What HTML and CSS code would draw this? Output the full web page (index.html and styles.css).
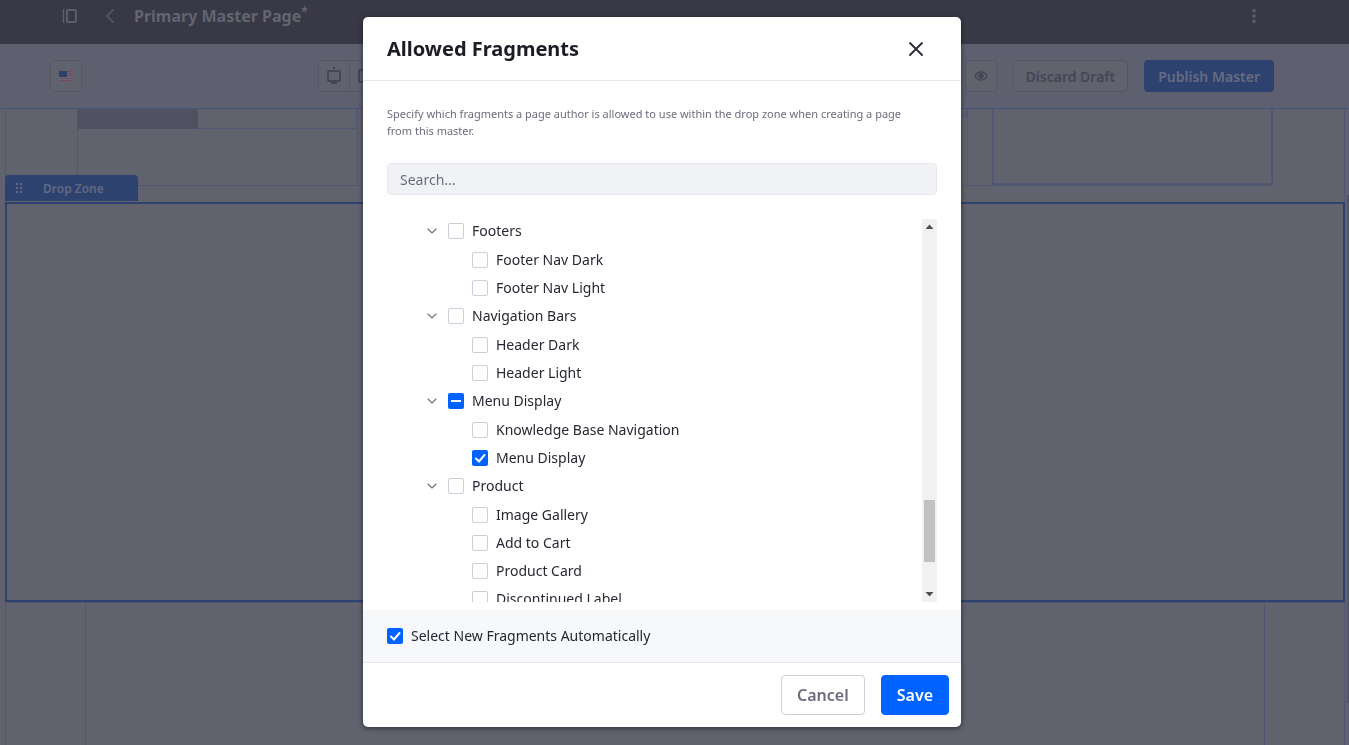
FILE: index.html
```html
<!DOCTYPE html>
<html lang="en">
<head>
<meta charset="utf-8">
<title>Primary Master Page</title>
<link rel="stylesheet" href="styles.css">
</head>
<body>
<div class="page">
  <header class="topbar">
    <button class="icon-btn" type="button" aria-label="Toggle menu">
      <svg width="16" height="16" viewBox="0 0 16 16" fill="none" stroke="currentColor"><path d="M1.500 1v14" stroke-width="1.400"/><rect x="5" y="2" width="9" height="12" rx="1" stroke-width="2"/></svg>
    </button>
    <a class="back" href="#" aria-label="Back">
      <svg width="8" height="14" viewBox="0 0 8 14" fill="none" stroke="currentColor" stroke-width="1.4" stroke-linecap="round"><path d="M7 1 1 7l6 6"/></svg>
    </a>
    <h1 class="page-title">Primary Master Page<sup>*</sup></h1>
    <button class="icon-btn more" type="button" aria-label="More options">
      <svg width="16" height="16" viewBox="0 0 16 16" fill="currentColor"><circle cx="8" cy="2.600" r="1.800"/><circle cx="8" cy="8" r="1.800"/><circle cx="8" cy="13.400" r="1.800"/></svg>
    </button>
  </header>

  <div class="toolbar">
    <button class="tool" type="button" aria-label="Language: English">
      <svg width="14" height="10" viewBox="0 0 14 10"><path fill="#6a6873" d="M0 0h14v10H0z"/><path stroke="#754a5c" d="M0 .5h14M0 2.500h14M0 4.500h14M0 7.500h14M0 9.500h14"/><path fill="#2e406f" d="M0 0h8v6H0z"/></svg>
    </button>
    <div class="devices">
      <button class="tool" type="button" aria-label="Desktop">
        <svg width="16" height="18" viewBox="0 0 16 18" fill="none" stroke="currentColor"><path d="M8 0v2" stroke-width="2"/><rect x="2" y="4" width="12" height="10" rx="1" stroke-width="2"/><path d="M5 16h6" stroke-width="2"/></svg>
      </button>
      <button class="tool" type="button" aria-label="Tablet">
        <svg width="16" height="16" viewBox="0 0 16 16" fill="none" stroke="currentColor" stroke-width="2"><rect x="2" y="2" width="12" height="12" rx="1"/></svg>
      </button>
    </div>
    <div class="actions">
      <button class="tool" type="button" aria-label="Preview">
        <svg width="14" height="10" viewBox="0 0 14 10"><path d="M1 5C2.500 2 4.500 1 7 1s4.500 1 6 4c-1.500 3-3.500 4-6 4S2.500 8 1 5z" fill="none" stroke="currentColor" stroke-width="1.400"/><path d="M7 2.200a2.800 2.800 0 1 0 2.800 2.800H7z" fill="currentColor"/><circle cx="8" cy="4" r="1.400" fill="currentColor"/></svg>
      </button>
      <button class="tool text" type="button">Discard Draft</button>
      <button class="tool text primary" type="button">Publish Master</button>
    </div>
  </div>

  <main class="canvas">
    <div class="row">
      <div class="col first"><div class="block"></div><div class="field"></div></div>
      <div class="col middle"><div class="slim"></div></div>
      <div class="col last"></div>
    </div>
    <section class="dropzone">
      <div class="tab">
        <svg width="7" height="10" viewBox="0 0 7 10" fill="currentColor"><path d="M0 0h2v2H0zM4 0h2v2H4zM0 4h2v2H0zM4 4h2v2H4zM0 8h2v2H0zM4 8h2v2H4z"/></svg>
        <span>Drop Zone</span>
      </div>
    </section>
    <div class="below"><div class="inner"></div></div>
  </main>
  <div class="page-scroll" aria-hidden="true"></div>
</div>

<div class="backdrop">
  <div class="dialog" role="dialog" aria-modal="true" aria-labelledby="dialog-title">
    <div class="dialog-head">
      <h2 id="dialog-title">Allowed Fragments</h2>
      <button class="close" type="button" aria-label="Close">
        <svg width="16" height="16" viewBox="0 0 16 16" fill="none" stroke="currentColor" stroke-width="1.800" stroke-linecap="round"><path d="m2 2 12 12M14 2 2 14"/></svg>
      </button>
    </div>

    <div class="dialog-body">
      <p class="hint">Specify which fragments a page author is allowed to use within the drop zone when creating a page from this master.</p>
      <input class="search" type="text" placeholder="Search..." aria-label="Search fragments">
      <div class="scroller">
        <ul class="tree">
          <li>
            <div class="node"><button class="toggle" type="button" aria-label="Collapse Footers"><svg width="10" height="6" viewBox="0 0 10 6"><path d="m1 1 4 4 4-4"/></svg></button><label><input type="checkbox">Footers</label></div>
            <ul>
              <li class="node"><label><input type="checkbox">Footer Nav Dark</label></li>
              <li class="node"><label><input type="checkbox">Footer Nav Light</label></li>
            </ul>
          </li>
          <li>
            <div class="node"><button class="toggle" type="button" aria-label="Collapse Navigation Bars"><svg width="10" height="6" viewBox="0 0 10 6"><path d="m1 1 4 4 4-4"/></svg></button><label><input type="checkbox">Navigation Bars</label></div>
            <ul>
              <li class="node"><label><input type="checkbox">Header Dark</label></li>
              <li class="node"><label><input type="checkbox">Header Light</label></li>
            </ul>
          </li>
          <li>
            <div class="node"><button class="toggle" type="button" aria-label="Collapse Menu Display"><svg width="10" height="6" viewBox="0 0 10 6"><path d="m1 1 4 4 4-4"/></svg></button><label><input class="partial" type="checkbox" aria-checked="mixed">Menu Display</label></div>
            <ul>
              <li class="node"><label><input type="checkbox">Knowledge Base Navigation</label></li>
              <li class="node"><label><input type="checkbox" checked>Menu Display</label></li>
            </ul>
          </li>
          <li>
            <div class="node"><button class="toggle" type="button" aria-label="Collapse Product"><svg width="10" height="6" viewBox="0 0 10 6"><path d="m1 1 4 4 4-4"/></svg></button><label><input type="checkbox">Product</label></div>
            <ul>
              <li class="node"><label><input type="checkbox">Image Gallery</label></li>
              <li class="node"><label><input type="checkbox">Add to Cart</label></li>
              <li class="node"><label><input type="checkbox">Product Card</label></li>
              <li class="node"><label><input type="checkbox">Discontinued Label</label></li>
            </ul>
          </li>
        </ul>
        <div class="scrollbar" aria-hidden="true">
          <svg width="15" height="15" viewBox="0 0 15 15" fill="#505050"><path d="M3.500 10h8L7.500 5.500z"/></svg>
          <div class="track"><div class="thumb"></div></div>
          <svg width="15" height="15" viewBox="0 0 15 15" fill="#505050"><path d="M3.500 5h8L7.500 9.500z"/></svg>
        </div>
      </div>
    </div>

    <div class="auto-select">
      <label><input type="checkbox" checked>Select New Fragments Automatically</label>
    </div>
    <div class="dialog-foot">
      <button class="btn" type="button">Cancel</button>
      <button class="btn save" type="button">Save</button>
    </div>
  </div>
</div>
</body>
</html>
```

FILE: styles.css
```css
* { box-sizing: border-box; }
body {
  margin: 0;
  font-family: "Noto Sans", sans-serif;
  font-size: 14px;
  color: #272833;
}
button, input { font: inherit; }
button { padding: 0; border: 0; background: none; color: inherit; }
ul { list-style: none; margin: 0; padding: 0; }
svg { display: block; }

/* Page behind the dialog */
.page {
  position: relative;
  display: flex;
  flex-direction: column;
  height: 100vh;
  overflow: hidden;
  background: #60626d;
}
.topbar {
  display: flex;
  align-items: center;
  height: 44px;
  padding: 0 87px 12px 62px;
  background: #383846;
  color: #5c5d6b;
}
.back { margin-left: 28px; color: inherit; }
.page-title {
  margin: 0 0 0 20px;
  font-size: 16px;
  line-height: 24px;
  font-weight: 700;
  color: #636570;
}
.page-title sup { font-size: 12px; line-height: 0; }
.more { margin-left: auto; }

.toolbar {
  display: flex;
  align-items: center;
  height: 65px;
  padding: 0 75px 0 50px;
  background: #5e6070;
  border-bottom: 1px solid #455580;
}
.tool {
  display: flex;
  align-items: center;
  justify-content: center;
  width: 32px;
  height: 32px;
  border: 1px solid #555766;
  border-radius: 4px;
  background: #60626d;
  color: #454656;
}
.tool.text { width: auto; padding: 0 12px; font-weight: 600; }
.tool.primary { padding: 0 14px; border: 0; background: #2e4270; color: #666b80; }
.devices { display: flex; margin-left: 236px; }
.devices .tool { border-radius: 4px 0 0 4px; }
.devices .tool + .tool { margin-left: -1px; border-radius: 0 4px 4px 0; }
.actions { display: flex; gap: 16px; margin-left: auto; }

.canvas {
  flex: 1;
  display: flex;
  flex-direction: column;
  margin: 0 4px 0 5px;
  border: solid #535872;
  border-width: 0 1px;
}
.row {
  display: flex;
  height: 77px;
  margin: 0 71px 16px;
  border-bottom: 1px solid #535872;
}
.col { border: solid #535872; border-width: 0 1px; }
.first { display: flex; width: 281px; }
.block { width: 120px; height: 20px; background: #4f5161; }
.field { flex: 1; height: 20px; border: solid #505878; border-width: 0 1px 1px 0; }
.middle { flex: 1; border-left: 0; }
.slim { height: 7px; border: solid #505878; border-width: 0 1px 1px 0; }
.last { width: 281px; margin-left: 24px; border-width: 0 2px 2px; }
.dropzone {
  position: relative;
  height: 400px;
  margin: 0 -1px;
  border: 2px solid #2e4270;
}
.tab {
  position: absolute;
  left: -2px;
  bottom: 100%;
  display: flex;
  align-items: center;
  gap: 20px;
  width: 133px;
  height: 26px;
  margin-bottom: 3px;
  padding: 0 11px;
  border-radius: 4px 4px 0 0;
  background: #2e4270;
  color: #636980;
  font-size: 12px;
  font-weight: 600;
}
.below { flex: 1; display: flex; padding: 0 79px; border-top: 1px solid #535872; }
.inner { flex: 1; border: solid #535872; border-width: 0 1px; }
.page-scroll {
  position: absolute;
  top: 195px;
  right: 0;
  bottom: 42px;
  width: 2px;
  background: #555661;
}

/* Dialog */
.backdrop {
  position: fixed;
  inset: 0;
  display: flex;
  justify-content: center;
  padding: 17px 25px 18px 0;
}
.dialog {
  display: flex;
  flex-direction: column;
  width: 598px;
  max-width: 100%;
  overflow: hidden;
  border-radius: 5px;
  background: #fff;
  box-shadow: 0 1px 5px rgba(20, 20, 30, .7);
}
.dialog-head {
  display: flex;
  align-items: center;
  justify-content: space-between;
  height: 64px;
  padding: 0 29px 0 24px;
  border-bottom: 1px solid #e7e7ed;
}
.dialog-head h2 { margin: 0; font-size: 20px; line-height: 24px; font-weight: 700; color: #1c1c24; }
.close { display: flex; align-items: center; justify-content: center; width: 32px; height: 32px; }
.dialog-body {
  flex: 1;
  display: flex;
  flex-direction: column;
  gap: 24px;
  min-height: 0;
  padding: 24px 24px 8px;
}
.hint { margin: 0; padding-right: 16px; font-size: 11px; line-height: 17px; color: #6b6c7e; }
.search {
  width: 100%;
  height: 32px;
  padding: 0 12px;
  border: 1px solid #e7e7ed;
  border-radius: 4px;
  background: #f1f2f5;
}
.search::placeholder { color: #6b6c7e; opacity: 1; }
.scroller { flex: 1; display: flex; min-height: 0; }
.tree { flex: 1; overflow: hidden; }
.tree > li { padding-left: 37px; }
.tree ul { padding: 1px 0 0 48px; }
.node { display: flex; align-items: center; height: 24px; margin-bottom: 4px; }
.toggle { display: flex; align-items: center; justify-content: center; width: 16px; height: 16px; margin-right: 8px; }
.toggle path { fill: none; stroke: #6b6c7e; stroke-width: 1.1; stroke-linecap: round; }
label { display: flex; align-items: center; gap: 8px; line-height: 20px; }
input[type="checkbox"] {
  appearance: none;
  flex: none;
  width: 16px;
  height: 16px;
  margin: 0;
  border: 1px solid #cdced9;
  border-radius: 2px;
  background: #fff center / 16px no-repeat;
}
input[type="checkbox"]:checked, input[type="checkbox"].partial { border: 0; background-color: #0062ff; }
input[type="checkbox"]:checked {
  background-image: url("data:image/svg+xml,%3Csvg xmlns='http://www.w3.org/2000/svg' viewBox='0 0 16 16'%3E%3Cpath d='M4 8.500l3 3 5.500-6.500' fill='none' stroke='white' stroke-width='2' stroke-linecap='round'/%3E%3C/svg%3E");
}
input[type="checkbox"].partial { background-image: linear-gradient(#fff, #fff); background-size: 10px 2px; }
.scrollbar { display: flex; flex-direction: column; width: 15px; background: #f1f1f1; }
.track { flex: 1; display: flex; flex-direction: column; padding: 0 2px; }
.track::before { content: ""; flex: 266; }
.track::after { content: ""; flex: 25; }
.thumb { flex: 62; background: #c1c1c1; }
.auto-select { display: flex; align-items: center; height: 52px; padding: 0 24px; background: #f7f8f9; }
.dialog-foot {
  display: flex;
  justify-content: flex-end;
  gap: 16px;
  padding: 12px;
  border-top: 1px solid #e7e7ed;
}
.btn {
  height: 40px;
  padding: 0 15px;
  border: 1px solid #cdced9;
  border-radius: 4px;
  font-size: 16px;
  font-weight: 600;
  color: #6b6c7e;
}
.save { border-color: #0062ff; background: #0062ff; color: #fff; }
```
